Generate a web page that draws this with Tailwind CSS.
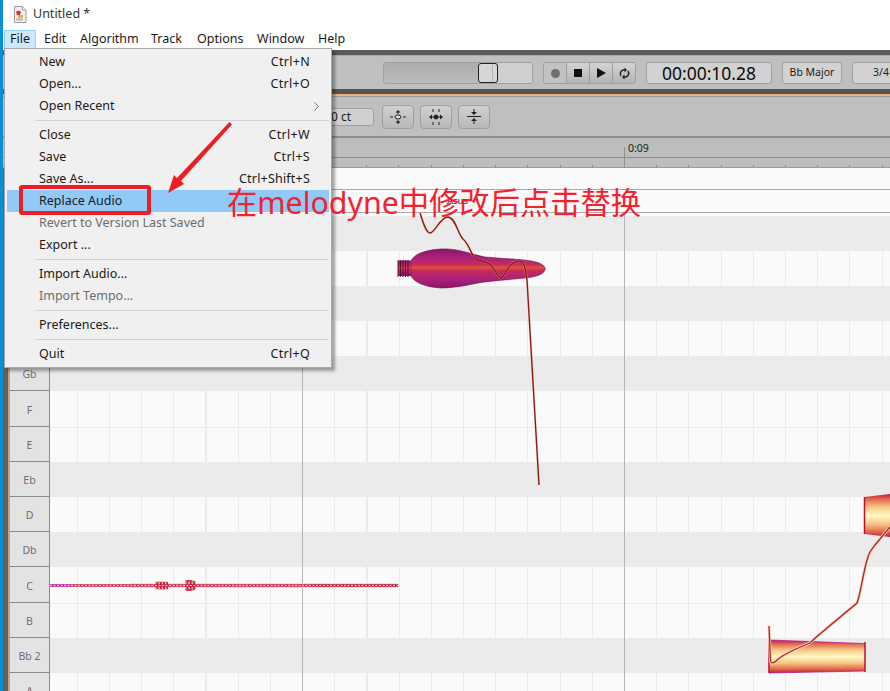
<!DOCTYPE html>
<html lang="en">
<head>
    <meta charset="UTF-8">
    <title>Untitled</title>
    <script src="https://cdn.jsdelivr.net/npm/@tailwindcss/browser@4"></script>
</head>
<body class="relative w-[890px] h-[691px] overflow-hidden bg-white flex font-['Noto_Sans','Noto_Sans_CJK_SC',sans-serif] text-[12.5px] text-[#1a1a1a]">

    <!-- window edge -->
    <div class="w-[3px] h-full bg-[#0a8ed6] shrink-0"></div>

    <div class="flex-1 flex flex-col min-w-0">
        <!-- title bar -->
        <div class="h-[28px] flex items-center pl-[10px] gap-[6px] bg-white">
            <svg width="14" height="17" viewBox="0 0 14 17">
                <path d="M1.5 .5h8l3.5 3.5v12.500h-11.500z" fill="#f2f2f2" stroke="#9a9a9a"/>
                <path d="M9.500 .5v3.500h3.500" fill="#fff" stroke="#9a9a9a"/>
                <path d="M3 6c2-2 4-1.500 5 0l-1 3h-3z" fill="#d8352a"/>
                <path d="M5 9h5v3h-5z" fill="#e8b23c"/>
                <path d="M3 12.500h7v2h-7z" fill="#b9b9b9"/>
            </svg>
            <span class="text-[12.500px] text-[#333]">Untitled *</span>
        </div>

        <!-- menu bar -->
        <div class="h-[22px] flex items-center pl-[1px] bg-white">
            <div class="w-[32px] h-[19px] flex items-center justify-center bg-[#cce8ff] border border-[#99d1ff]">File</div>
            <span class="ml-[8px] w-[36px]">Edit</span>
            <span class="w-[71px]">Algorithm</span>
            <span class="w-[46px]">Track</span>
            <span class="w-[60px]">Options</span>
            <span class="w-[61px]">Window</span>
            <span>Help</span>
        </div>

        <div class="h-[5px] bg-[#5a5a5a]"></div>

        <!-- transport toolbar -->
        <div class="h-[34px] bg-[#bfbfbf] flex items-center pl-[380px] pt-[1px] border-t border-[#a8a8a8]">
            <div class="w-[150px] h-[22px] shrink-0 flex rounded-[3px] border border-[#a0a0a0] overflow-hidden">
                <div class="w-[94px] bg-linear-to-b from-[#adadad] to-[#bcbcbc]"></div>
                <div class="w-[20px] pl-[13px] rounded-[3px] border border-[#222] bg-[#d6d6d6]"><div class="w-[1px] h-full bg-[#b4b4b4]"></div></div>
                <div class="flex-1 bg-[#cfcfcf]"></div>
            </div>
            <div class="ml-[10px] w-[93px] h-[22px] shrink-0 flex rounded-[3px] border border-[#a0a0a0] overflow-hidden">
                <div class="w-[23px] flex items-center justify-center border-r border-[#9c9c9c] bg-[#c2c2c2]">
                    <div class="w-[9px] h-[9px] rounded-full bg-[#6e6e6e]"></div>
                </div>
                <div class="w-[23px] flex items-center justify-center border-r border-[#9c9c9c] bg-linear-to-b from-[#d4d4d4] to-[#b4b4b4]">
                    <div class="w-[8px] h-[8px] bg-[#111]"></div>
                </div>
                <div class="w-[23px] flex items-center justify-center border-r border-[#9c9c9c] bg-linear-to-b from-[#d4d4d4] to-[#b4b4b4]">
                    <svg width="9" height="10" viewBox="0 0 9 10"><path d="M0 0l9 5-9 5z" fill="#111"/></svg>
                </div>
                <div class="flex-1 flex items-center justify-center bg-linear-to-b from-[#d4d4d4] to-[#b4b4b4]">
                    <svg width="11" height="13" viewBox="0 0 11 13" fill="none" stroke="#222" stroke-width="1.500">
                        <path d="M2 9a4 4 0 0 1 2-6h2"/><path d="M9 4a4 4 0 0 1-2 6h-2"/>
                        <path d="M5.500 .5l2.500 2.500-2.500 2.500z" fill="#222" stroke="none"/>
                        <path d="M5.500 7.500l-2.500 2.500 2.500 2.500z" fill="#222" stroke="none"/>
                    </svg>
                </div>
            </div>
            <div class="ml-[10px] w-[126px] h-[22px] shrink-0 flex items-center justify-center rounded-[3px] border border-[#a0a0a0] bg-[#d2d2d2] text-[17.500px] text-[#0c0c0c]">00:00:10.28</div>
            <div class="ml-[10px] w-[60px] h-[22px] shrink-0 flex items-center justify-center rounded-[3px] border border-[#a0a0a0] bg-[#d2d2d2] text-[10.500px]">Bb Major</div>
            <div class="ml-[10px] w-[60px] shrink-0 h-[22px] flex items-center pl-[20px] rounded-[3px] border border-[#a0a0a0] bg-[#d2d2d2] text-[10.500px]">3/4</div>
        </div>

        <div class="h-[5px] bg-[#555]"></div>
        <div class="h-[2px] bg-[#f4b27a]"></div>

        <!-- tool row -->
        <div class="h-[42px] bg-[#bfbfbf] flex items-center pl-[267px] border-t border-[#999] border-b-2 border-b-[#8c8c8c]">
            <div class="w-[104px] h-[18px] flex items-center pl-[60px] rounded-[3px] border border-[#a0a0a0] bg-[#d0d0d0] text-[12px]">0 ct</div>
            <div class="ml-[8px] w-[32px] h-[24px] flex items-center justify-center rounded-[4px] border border-[#a0a0a0] bg-linear-to-b from-[#d0d0d0] to-[#b8b8b8]">
                <svg width="16" height="14" viewBox="0 0 16 14" fill="none" stroke="#222">
                    <path d="M0 7h3M13 7h3M8 2v2M8 10v2"/><ellipse cx="8" cy="7" rx="3" ry="2" fill="#ddd"/>
                    <path d="M8 0l2.500 2.500h-5zM8 14l2.500-2.500h-5z" fill="#222" stroke="none"/>
                </svg>
            </div>
            <div class="ml-[6px] w-[32px] h-[24px] flex items-center justify-center rounded-[4px] border border-[#a0a0a0] bg-linear-to-b from-[#d0d0d0] to-[#b8b8b8]">
                <svg width="14" height="16" viewBox="0 0 14 16" fill="none" stroke="#222">
                    <path d="M4 0v3M10 0v3M4 13v3M10 13v3M2 8h10"/><circle cx="7" cy="8" r="2" fill="#222"/>
                    <path d="M0 8l3-2.500v5zM14 8l-3-2.500v5z" fill="#222" stroke="none"/>
                </svg>
            </div>
            <div class="ml-[6px] w-[32px] h-[24px] flex items-center justify-center rounded-[4px] border border-[#a0a0a0] bg-linear-to-b from-[#d0d0d0] to-[#b8b8b8]">
                <svg width="14" height="15" viewBox="0 0 14 15" fill="none" stroke="#222">
                    <path d="M0 7.500h14M7 0v4M7 11v4"/>
                    <path d="M7 6l-3-3h6zM7 9l-3 3h6z" fill="#222" stroke="none"/>
                </svg>
            </div>
        </div>

        <!-- ruler -->
        <div class="h-[20px] bg-[#bdbdbd] border-b border-[#8f8f8f] flex items-center pl-[625px] text-[10.500px] pt-[3px]">0:09</div>
        <div class="h-[10px] bg-[#bdbdbd] border-b border-[#9a9a9a]"></div>

        <!-- editor -->
        <div class="flex-1 flex min-h-0">
            <div class="w-[5px] bg-[#6b6058]"></div>
            <div class="w-[2px] bg-[#c8a47e]"></div>

            <!-- keys -->
            <div class="w-[40px] shrink-0 flex flex-col border-r border-[#8a8a8a] bg-[#e3e3e3] text-[10.500px] text-[#6d6d78] text-center">
                <div class="h-[47.500px] shrink-0"></div>
                <div class="h-[35.200px] shrink-0 pt-[4px] flex items-center justify-center border-b border-[#8a8a8a]">Bb</div>
                <div class="h-[35.200px] shrink-0 pt-[4px] flex items-center justify-center border-b border-[#8a8a8a]">A</div>
                <div class="h-[35.200px] shrink-0 pt-[4px] flex items-center justify-center border-b border-[#8a8a8a]">Ab</div>
                <div class="h-[35.200px] shrink-0 pt-[4px] flex items-center justify-center border-b border-[#8a8a8a]">G</div>
                <div class="h-[35.200px] shrink-0 pt-[4px] flex items-center justify-center border-b border-[#8a8a8a]">Gb</div>
                <div class="h-[35.200px] shrink-0 pt-[4px] flex items-center justify-center border-b border-[#8a8a8a]">F</div>
                <div class="h-[35.200px] shrink-0 pt-[4px] flex items-center justify-center border-b border-[#8a8a8a]">E</div>
                <div class="h-[35.200px] shrink-0 pt-[4px] flex items-center justify-center border-b border-[#8a8a8a]">Eb</div>
                <div class="h-[35.200px] shrink-0 pt-[4px] flex items-center justify-center border-b border-[#8a8a8a]">D</div>
                <div class="h-[35.200px] shrink-0 pt-[4px] flex items-center justify-center border-b border-[#8a8a8a]">Db</div>
                <div class="h-[35.200px] shrink-0 pt-[4px] flex items-center justify-center border-b border-[#8a8a8a]">C</div>
                <div class="h-[35.200px] shrink-0 pt-[4px] flex items-center justify-center border-b border-[#8a8a8a]">B</div>
                <div class="h-[35.200px] shrink-0 pt-[4px] flex items-center justify-center border-b border-[#8a8a8a]">Bb 2</div>
                <div class="h-[35.200px] shrink-0 pt-[4px] flex items-center justify-center border-b border-[#8a8a8a]">A</div>
            </div>

            <!-- pitch grid -->
            <div class="flex-1 flex flex-col min-w-0">
                <div class="h-[22px] shrink-0 bg-[#fafafa] border-b border-[#a8a8a8]"></div>
                <div class="h-[23px] shrink-0 bg-[#fafafa] border-b border-[#a8a8a8] flex items-center pl-[397px] text-[9.500px] text-[#222]">Asus</div>
                <div class="h-[2.500px] shrink-0 bg-[#fafafa]"></div>
                <div class="h-[35.200px] shrink-0 bg-[#ebebeb]"></div>
                <div class="h-[35.200px] shrink-0 bg-[repeating-linear-gradient(90deg,#fafafa_0,#fafafa_26.5px,#ebebeb_26.5px,#ebebeb_27.7px,#fafafa_27.7px,#fafafa_32.2px)]"></div>
                <div class="h-[35.200px] shrink-0 bg-[#ebebeb]"></div>
                <div class="h-[35.200px] shrink-0 bg-[repeating-linear-gradient(90deg,#fafafa_0,#fafafa_26.5px,#ebebeb_26.5px,#ebebeb_27.7px,#fafafa_27.7px,#fafafa_32.2px)]"></div>
                <div class="h-[35.200px] shrink-0 bg-[#ebebeb]"></div>
                <div class="h-[35.200px] shrink-0 bg-[repeating-linear-gradient(90deg,#fafafa_0,#fafafa_26.5px,#ebebeb_26.5px,#ebebeb_27.7px,#fafafa_27.7px,#fafafa_32.2px)]"></div>
                <div class="h-[35.200px] shrink-0 border-t border-[#ebebeb] bg-[repeating-linear-gradient(90deg,#fafafa_0,#fafafa_26.5px,#ebebeb_26.5px,#ebebeb_27.7px,#fafafa_27.7px,#fafafa_32.2px)]"></div>
                <div class="h-[35.200px] shrink-0 bg-[#ebebeb]"></div>
                <div class="h-[35.200px] shrink-0 bg-[repeating-linear-gradient(90deg,#fafafa_0,#fafafa_26.5px,#ebebeb_26.5px,#ebebeb_27.7px,#fafafa_27.7px,#fafafa_32.2px)]"></div>
                <div class="h-[35.200px] shrink-0 bg-[#ebebeb]"></div>
                <div class="h-[35.200px] shrink-0 bg-[repeating-linear-gradient(90deg,#fafafa_0,#fafafa_26.5px,#ebebeb_26.5px,#ebebeb_27.7px,#fafafa_27.7px,#fafafa_32.2px)]"></div>
                <div class="h-[35.200px] shrink-0 border-t border-[#ebebeb] bg-[repeating-linear-gradient(90deg,#fafafa_0,#fafafa_26.5px,#ebebeb_26.5px,#ebebeb_27.7px,#fafafa_27.7px,#fafafa_32.2px)]"></div>
                <div class="h-[35.200px] shrink-0 bg-[#ebebeb]"></div>
                <div class="h-[35.200px] shrink-0 bg-[repeating-linear-gradient(90deg,#fafafa_0,#fafafa_26.5px,#ebebeb_26.5px,#ebebeb_27.7px,#fafafa_27.7px,#fafafa_32.2px)]"></div>
            </div>
        </div>
    </div>

    <!-- notes and pitch curves -->
    <svg class="absolute top-0 left-0 pointer-events-none" width="890" height="691" viewBox="0 0 890 691" fill="none">
        <defs>
            <linearGradient id="blob" x1="0" y1="0" x2="0" y2="1">
                <stop offset="0" stop-color="#8c1560"/>
                <stop offset=".2" stop-color="#a81f80"/>
                <stop offset=".4" stop-color="#c62a5c"/>
                <stop offset=".48" stop-color="#df5238"/>
                <stop offset=".56" stop-color="#c62a5c"/>
                <stop offset=".8" stop-color="#a81f80"/>
                <stop offset="1" stop-color="#8c1560"/>
            </linearGradient>
            <linearGradient id="warm" x1="0" y1="0" x2="0" y2="1">
                <stop offset="0" stop-color="#c01850"/>
                <stop offset=".12" stop-color="#e2694a"/>
                <stop offset=".3" stop-color="#f6c486"/>
                <stop offset=".5" stop-color="#fefbc0"/>
                <stop offset=".7" stop-color="#f6c486"/>
                <stop offset=".88" stop-color="#e2694a"/>
                <stop offset="1" stop-color="#c01850"/>
            </linearGradient>
        </defs>

        <!-- ruler ticks -->
        <path d="M366.500 165v3M398.500 165v3M431.500 165v3M463.500 165v3M495.500 165v3M527.500 165v3M560.500 165v3M592.500 165v3M656.500 165v3M688.500 165v3M721.500 165v3M753.500 165v3M785.500 165v3M817.500 165v3M849.500 165v3M882.500 165v3" stroke="#8f8f8f"/>
        <path d="M624.500 147v21" stroke="#8f8f8f"/>

        <!-- bar lines -->
        <path d="M302.500 214v477M624.500 214v477" stroke="#b4b4b4"/>

        <!-- note with attack -->
        <path d="M411 261C414 254 425 250 441 249C458 248 470 254 485 257C505 259 525 259 536 262C544 264 546 268 545 270C543 275 535 277 525 278C505 280 490 281 478 283C465 286 450 288 441 288C425 287 415 283 411 276Z" fill="url(#blob)" stroke="#6e1040" stroke-width=".6"/>
        <path d="M398 260.500h13v15.500h-13z" fill="url(#blob)"/>
        <path d="M398 260v17M400.500 260v17M403 260v17M405.500 260v17M408 260v17" stroke="#4f0c2c" stroke-width=".9"/>

        <!-- long flat note -->
        <path d="M130 585.500H398" stroke="#f9dcd4" stroke-width="5"/>
        <path d="M155 582C160 581.500 164 581.500 168 582V589C164 589.500 160 589.500 155 589Z" fill="#c8205a"/>
        <path d="M185 581C187 579.500 191 579.500 196 582V589C191 591.500 187 591.500 185 590Z" fill="#c8205a"/>
        <path d="M155 585.500H168M185 585.500H196" stroke="#f0b870" stroke-width="8" stroke-dasharray="1.500 1.800"/>
        <path d="M50 585.500H72" stroke="#b3119a" stroke-width="2.500"/>
        <path d="M72 585.500H310" stroke="#c41f45" stroke-width="2.500"/>
        <path d="M310 585.500H398" stroke="#b80f2e" stroke-width="2.500"/>
        <path d="M50 585.500H398" stroke="#f8d68c" stroke-width="1" stroke-dasharray="2 1.500"/>

        <!-- bottom right notes -->
        <path d="M769 640L865 643.500V671L769 673Z" fill="url(#warm)"/>
        <path d="M769 640L865 643.500M769 673L865 671" stroke="#b3119a" stroke-width=".7"/>
        <path d="M769 640V673M865 642V672" stroke="#c0102c" stroke-width="1.500"/>
        <path d="M864.500 497L890 494V537L864.500 534Z" fill="url(#warm)"/>
        <path d="M864.500 497V534" stroke="#c0102c" stroke-width="1.500"/>

        <!-- pitch curves -->
        <path d="M420 213C423 222 426 233 430 233C435 233 440 217 448 217C456 218 458 235 463 239C470 245 472 258 477 260C483 262 488 262 491 265C495 270 498 278 501 278C504 277 507 268 511 265C515 261 520 260 523 263C526 268 526 275 527 280L539 485" stroke="#f3c4b4" stroke-width="2.600" opacity=".35"/>
        <path d="M420 213C423 222 426 233 430 233C435 233 440 217 448 217C456 218 458 235 463 239C470 245 472 258 477 260C483 262 488 262 491 265C495 270 498 278 501 278C504 277 507 268 511 265C515 261 520 260 523 263C526 268 526 275 527 280L539 485" stroke="#8f1a10" stroke-width="1.400"/>
        <path d="M769 626L770.500 661C771 664 774 663 776 661C782 655 795 649 810 643C816 637 820 634 827 628L857 603C860 596 862 580 866 564C869 552 871 550 875 545L890 527" stroke="#f5d0bd" stroke-width="3"/>
        <path d="M769 626L770.500 661C771 664 774 663 776 661C782 655 795 649 810 643C816 637 820 634 827 628L857 603C860 596 862 580 866 564C869 552 871 550 875 545L890 527" stroke="#a9281e" stroke-width="1.300"/>
    </svg>

    <!-- file menu -->
    <div class="absolute left-[4px] top-[48px] w-[328px] h-[320px] bg-[#f0f0f0] border border-[#a8a8a8] shadow-[3px_3px_3px_rgba(0,0,0,0.35)] p-[2px] flex flex-col">
        <div class="h-[22px] shrink-0 flex items-center justify-between pl-[32px] pr-[19px]"><span>New</span><span class="tracking-[0.3px]">Ctrl+N</span></div>
        <div class="h-[22px] shrink-0 flex items-center justify-between pl-[32px] pr-[19px]"><span>Open...</span><span class="tracking-[0.3px]">Ctrl+O</span></div>
        <div class="h-[22px] shrink-0 flex items-center justify-between pl-[32px] pr-[10px]"><span>Open Recent</span>
            <svg width="5" height="9" viewBox="0 0 5 9" fill="none" stroke="#777"><path d="M.5 .5l4 4-4 4"/></svg>
        </div>
        <div class="h-[7px] shrink-0 flex items-center pl-[28px]"><div class="w-full h-[1px] bg-[#d4d4d4]"></div></div>
        <div class="h-[22px] shrink-0 flex items-center justify-between pl-[32px] pr-[19px]"><span>Close</span><span class="tracking-[0.3px]">Ctrl+W</span></div>
        <div class="h-[22px] shrink-0 flex items-center justify-between pl-[32px] pr-[19px]"><span>Save</span><span class="tracking-[0.3px]">Ctrl+S</span></div>
        <div class="h-[22px] shrink-0 flex items-center justify-between pl-[32px] pr-[19px]"><span>Save As...</span><span class="tracking-[0.2px]">Ctrl+Shift+S</span></div>
        <div class="h-[22px] shrink-0 flex items-center pl-[32px] pr-[18px] bg-[#91c9f7]">Replace Audio</div>
        <div class="h-[22px] shrink-0 flex items-center pl-[32px] pr-[18px] text-[#6d6d6d]">Revert to Version Last Saved</div>
        <div class="h-[22px] shrink-0 flex items-center pl-[32px] pr-[18px]">Export ...</div>
        <div class="h-[7px] shrink-0 flex items-center pl-[28px]"><div class="w-full h-[1px] bg-[#d4d4d4]"></div></div>
        <div class="h-[22px] shrink-0 flex items-center pl-[32px] pr-[18px]">Import Audio...</div>
        <div class="h-[22px] shrink-0 flex items-center pl-[32px] pr-[18px] text-[#6d6d6d]">Import Tempo...</div>
        <div class="h-[7px] shrink-0 flex items-center pl-[28px]"><div class="w-full h-[1px] bg-[#d4d4d4]"></div></div>
        <div class="h-[22px] shrink-0 flex items-center pl-[32px] pr-[18px]">Preferences...</div>
        <div class="h-[7px] shrink-0 flex items-center pl-[28px]"><div class="w-full h-[1px] bg-[#d4d4d4]"></div></div>
        <div class="h-[22px] shrink-0 flex items-center justify-between pl-[32px] pr-[19px]"><span>Quit</span><span class="tracking-[0.3px]">Ctrl+Q</span></div>
    </div>

    <!-- annotations -->
    <div class="absolute left-[19px] top-[185px] w-[132px] h-[30px] rounded-[3px] border-[4px] border-[#ee1c25]"></div>
    <svg class="absolute top-0 left-0 pointer-events-none" width="890" height="691" viewBox="0 0 890 691">
        <path d="M229.500 122L232 124.500L181 181L184 184L168 193L174 175L177 178Z" fill="#ee1c25"/>
    </svg>
    <div class="absolute left-[227px] top-[182px] leading-[42px] text-[30.300px] whitespace-nowrap text-[#f5212f]">在melodyne中修改后点击替换</div>
</body>
</html>
